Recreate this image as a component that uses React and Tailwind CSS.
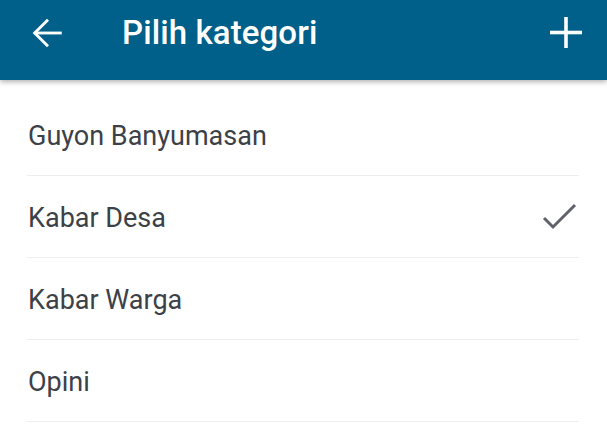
import React from 'react';

const categories = ['Guyon Banyumasan', 'Kabar Desa', 'Kabar Warga', 'Opini'];

const App = () => {
  const selected = 'Kabar Desa';

  return (
    <div className="w-[607px] h-[428px] overflow-hidden bg-white" style={{ fontFamily: 'Roboto, "Noto Sans", sans-serif' }}>
      {/* app bar */}
      <header className="relative z-10 h-[80px] bg-[#006089] flex items-center pb-[15px] text-white shadow-[0_2px_5px_rgba(0,0,0,0.3)]">
        <button className="w-[95px] h-[50px] flex items-center justify-center pr-[1px]">
          <svg width="40" height="40" viewBox="0 0 24 24" fill="none" stroke="white" strokeWidth="1.7" strokeLinecap="square">
            <path d="M20 12H5" />
            <path d="M12 4.6 4.6 12 12 19.4" />
          </svg>
        </button>
        <h1 className="flex-1 text-[33px] font-medium leading-none tracking-[0.1px] pl-[27px]">Pilih kategori</h1>
        <button className="w-[80px] h-[50px] flex items-center justify-center mr-[1px]">
          <svg width="34" height="34" viewBox="0 0 34 34" fill="none" stroke="white" strokeWidth="3.6">
            <path d="M17 1v31" />
            <path d="M1 16.5h32" />
          </svg>
        </button>
      </header>

      {/* list */}
      <ul className="pt-[14px] px-[27px] pr-[28px]">
        {categories.map((name) => (
          <li key={name} className="h-[82px] border-b border-[#eeeeee] flex items-center justify-between pl-[1px]">
            <span className="text-[27px] text-[#3c4148] pt-[3px]">{name}</span>
            {name === selected && (
              <svg width="36" height="28" viewBox="0 0 36 28" fill="none" stroke="#5f6269" strokeWidth="3" className="mr-[1px] mt-[1px]">
                <path d="M2 15 11 24 33 2" />
              </svg>
            )}
          </li>
        ))}
      </ul>
    </div>
  );
};

export default App;
